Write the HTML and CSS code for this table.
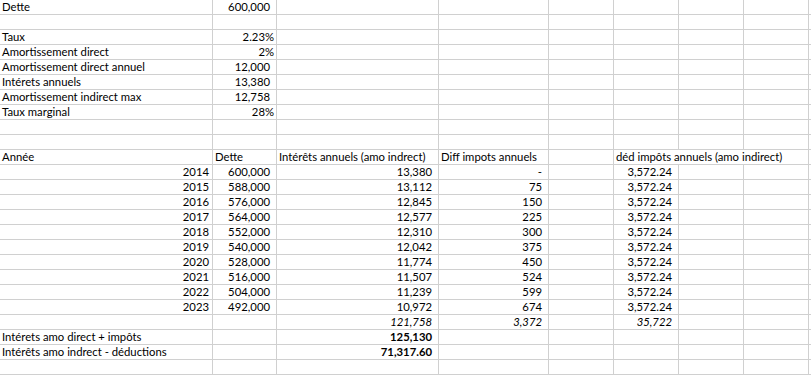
FILE: index.html
```html
<!DOCTYPE html>
<html lang="fr">
<head>
<meta charset="utf-8">
<title>Dette</title>
<link rel="stylesheet" href="styles.css">
</head>
<body>
<div class="sheet">
<div class="c">Dette</div><div class="c a">600,000</div><div class="c"></div><div class="c"></div><div class="c"></div><div class="c"></div><div class="c"></div><div class="c"></div><div class="c"></div>
<div class="c"></div><div class="c"></div><div class="c"></div><div class="c"></div><div class="c"></div><div class="c"></div><div class="c"></div><div class="c"></div><div class="c"></div>
<div class="c">Taux</div><div class="c r">2.23%</div><div class="c"></div><div class="c"></div><div class="c"></div><div class="c"></div><div class="c"></div><div class="c"></div><div class="c"></div>
<div class="c">Amortissement direct</div><div class="c r">2%</div><div class="c"></div><div class="c"></div><div class="c"></div><div class="c"></div><div class="c"></div><div class="c"></div><div class="c"></div>
<div class="c">Amortissement direct annuel</div><div class="c a">12,000</div><div class="c"></div><div class="c"></div><div class="c"></div><div class="c"></div><div class="c"></div><div class="c"></div><div class="c"></div>
<div class="c">Intérets annuels</div><div class="c a">13,380</div><div class="c"></div><div class="c"></div><div class="c"></div><div class="c"></div><div class="c"></div><div class="c"></div><div class="c"></div>
<div class="c">Amortissement indirect max</div><div class="c a">12,758</div><div class="c"></div><div class="c"></div><div class="c"></div><div class="c"></div><div class="c"></div><div class="c"></div><div class="c"></div>
<div class="c">Taux marginal</div><div class="c r">28%</div><div class="c"></div><div class="c"></div><div class="c"></div><div class="c"></div><div class="c"></div><div class="c"></div><div class="c"></div>
<div class="c"></div><div class="c"></div><div class="c"></div><div class="c"></div><div class="c"></div><div class="c"></div><div class="c"></div><div class="c"></div><div class="c"></div>
<div class="c"></div><div class="c"></div><div class="c"></div><div class="c"></div><div class="c"></div><div class="c"></div><div class="c"></div><div class="c"></div><div class="c"></div>
<div class="c">Année</div><div class="c">Dette</div><div class="c">Intérêts annuels (amo indrect)</div><div class="c">Diff impots annuels</div><div class="c"></div><div class="c span3">déd impôts annuels (amo indirect)</div><div class="c"></div>
<div class="c y">2014</div><div class="c a">600,000</div><div class="c a">13,380</div><div class="c a">-</div><div class="c"></div><div class="c a">3,572.24</div><div class="c"></div><div class="c"></div><div class="c"></div>
<div class="c y">2015</div><div class="c a">588,000</div><div class="c a">13,112</div><div class="c a">75</div><div class="c"></div><div class="c a">3,572.24</div><div class="c"></div><div class="c"></div><div class="c"></div>
<div class="c y">2016</div><div class="c a">576,000</div><div class="c a">12,845</div><div class="c a">150</div><div class="c"></div><div class="c a">3,572.24</div><div class="c"></div><div class="c"></div><div class="c"></div>
<div class="c y">2017</div><div class="c a">564,000</div><div class="c a">12,577</div><div class="c a">225</div><div class="c"></div><div class="c a">3,572.24</div><div class="c"></div><div class="c"></div><div class="c"></div>
<div class="c y">2018</div><div class="c a">552,000</div><div class="c a">12,310</div><div class="c a">300</div><div class="c"></div><div class="c a">3,572.24</div><div class="c"></div><div class="c"></div><div class="c"></div>
<div class="c y">2019</div><div class="c a">540,000</div><div class="c a">12,042</div><div class="c a">375</div><div class="c"></div><div class="c a">3,572.24</div><div class="c"></div><div class="c"></div><div class="c"></div>
<div class="c y">2020</div><div class="c a">528,000</div><div class="c a">11,774</div><div class="c a">450</div><div class="c"></div><div class="c a">3,572.24</div><div class="c"></div><div class="c"></div><div class="c"></div>
<div class="c y">2021</div><div class="c a">516,000</div><div class="c a">11,507</div><div class="c a">524</div><div class="c"></div><div class="c a">3,572.24</div><div class="c"></div><div class="c"></div><div class="c"></div>
<div class="c y">2022</div><div class="c a">504,000</div><div class="c a">11,239</div><div class="c a">599</div><div class="c"></div><div class="c a">3,572.24</div><div class="c"></div><div class="c"></div><div class="c"></div>
<div class="c y">2023</div><div class="c a">492,000</div><div class="c a">10,972</div><div class="c a">674</div><div class="c"></div><div class="c a">3,572.24</div><div class="c"></div><div class="c"></div><div class="c"></div>
<div class="c"></div><div class="c"></div><div class="c a i">121,758</div><div class="c a i">3,372</div><div class="c"></div><div class="c a i">35,722</div><div class="c"></div><div class="c"></div><div class="c"></div>
<div class="c">Intérets amo direct + impôts</div><div class="c"></div><div class="c a b">125,130</div><div class="c"></div><div class="c"></div><div class="c"></div><div class="c"></div><div class="c"></div><div class="c"></div>
<div class="c">Intérêts amo indrect - déductions</div><div class="c"></div><div class="c a b">71,317.60</div><div class="c"></div><div class="c"></div><div class="c"></div><div class="c"></div><div class="c"></div><div class="c"></div>
<div class="c"></div><div class="c"></div><div class="c"></div><div class="c"></div><div class="c"></div><div class="c"></div><div class="c"></div><div class="c"></div><div class="c"></div>
</div>
</body>
</html>
```

FILE: styles.css
```css
html, body {
  margin: 0;
  padding: 0;
  background: #ffffff;
}

.sheet {
  display: grid;
  grid-template-columns: 212px 63px 161px 109px 64px 64px 64px 64px 1fr;
  grid-auto-rows: 14px;
  gap: 1px;
  padding-bottom: 1px;
  background: #d0d0d0;
  width: 811px;
  font-family: Lato, "Liberation Sans", sans-serif;
  font-size: 11.3px;
  line-height: 14px;
  color: #000;
}

.c {
  background: #ffffff;
  padding: 0 2px;
  white-space: nowrap;
  overflow: hidden;
}

.r {
  text-align: right;
  padding-right: 2px;
}

.y {
  text-align: right;
  padding-right: 3px;
}

.a {
  text-align: right;
  padding-right: 6px;
}

.i {
  font-style: italic;
}

.b {
  font-weight: bold;
}

.span3 {
  grid-column: span 3;
}
```
